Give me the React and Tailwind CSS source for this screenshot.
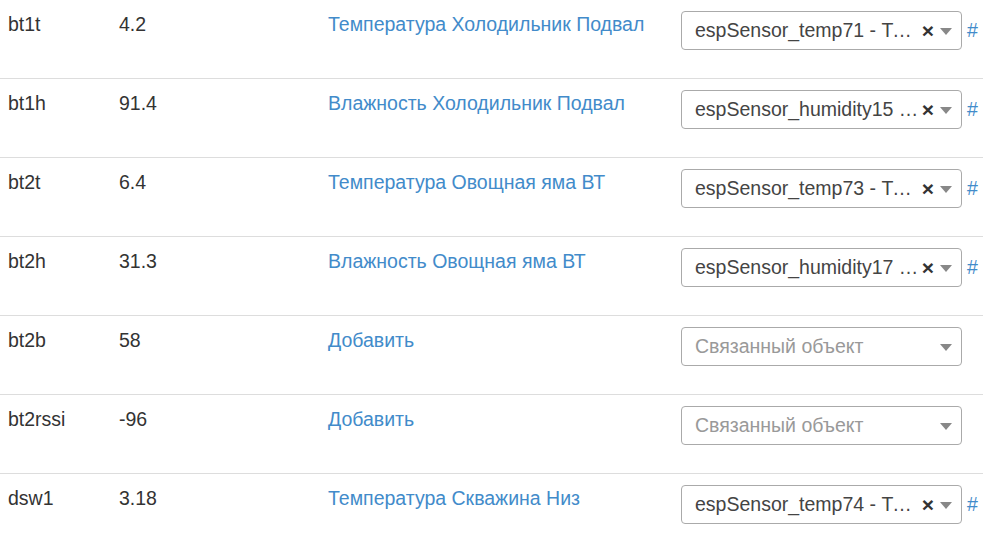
import React from 'react';

const rows = [
  { name: 'bt1t', value: '4.2', link: 'Температура Холодильник Подвал', obj: 'espSensor_temp71 - Температура' },
  { name: 'bt1h', value: '91.4', link: 'Влажность Холодильник Подвал', obj: 'espSensor_humidity15 - Влажность' },
  { name: 'bt2t', value: '6.4', link: 'Температура Овощная яма ВТ', obj: 'espSensor_temp73 - Температура' },
  { name: 'bt2h', value: '31.3', link: 'Влажность Овощная яма ВТ', obj: 'espSensor_humidity17 - Влажность' },
  { name: 'bt2b', value: '58', link: 'Добавить', obj: null },
  { name: 'bt2rssi', value: '-96', link: 'Добавить', obj: null },
  { name: 'dsw1', value: '3.18', link: 'Температура Скважина Низ', obj: 'espSensor_temp74 - Температура' },
];

function Select({ value }) {
  return (
    <div className="flex items-center">
      <div className="flex h-[39px] w-[281px] items-center rounded border border-[#aaa] bg-white pl-[13px] pr-[9px]">
        <span className={`min-w-0 flex-1 truncate ${value ? 'text-[#444]' : 'text-[#999]'}`}>
          {value || 'Связанный объект'}
        </span>
        {value && <span className="ml-[3px] mr-[6px] text-[21px] font-bold leading-none text-[#333]">×</span>}
        {!value && <span className="w-2" />}
        <span className="mt-px h-0 w-0 border-x-[6px] border-t-[7px] border-x-transparent border-t-[#888]" />
      </div>
      {value && <a className="ml-[5px] text-[#428bca]">#</a>}
    </div>
  );
}

export default function App() {
  return (
    <div className="min-h-screen overflow-hidden bg-white text-[19.5px] leading-[1.42857] text-[#333]" style={{ fontFamily: '"Liberation Sans", Arial, sans-serif' }}>
      <div className="-mt-px">
        {rows.map((r) => (
          <div key={r.name} className="grid h-[79px] grid-cols-[111px_209px_353px_1fr] border-t border-[#ddd]">
            <div className="px-2 pt-[11px]">{r.name}</div>
            <div className="px-2 pt-[11px]">{r.value}</div>
            <div className="px-2 pt-[11px]">
              <a className="cursor-pointer text-[#428bca]">{r.link}</a>
            </div>
            <div className="px-2 pt-[11px]">
              <Select value={r.obj} />
            </div>
          </div>
        ))}
      </div>
    </div>
  );
}
